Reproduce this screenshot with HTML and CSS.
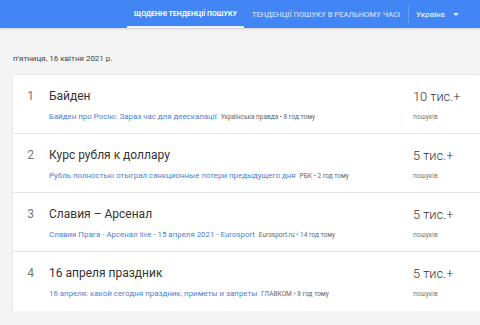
FILE: index.html
```html
<!DOCTYPE html>
<html lang="uk">
<head>
  <meta charset="UTF-8">
  <title>Тенденції пошуку</title>
  <link rel="stylesheet" href="styles.css">
</head>
<body>
  <div class="topbar">
    <div class="tabs">
      <div class="tab active">ЩОДЕННІ ТЕНДЕНЦІЇ ПОШУКУ</div>
      <div class="tab">ТЕНДЕНЦІЇ ПОШУКУ В РЕАЛЬНОМУ ЧАСІ</div>
    </div>
    <div class="geo">Україна <span class="caret"></span></div>
  </div>

  <div class="content">
    <div class="date">п'ятниця, 16 квітня 2021 р.</div>

    <div class="list">
      <div class="row">
        <div class="idx">1</div>
        <div class="main">
          <div class="title">Байден</div>
          <div class="sub"><a>Байден про Росію: Зараз час для деескалації</a> <span class="src">Українська правда • 8 год тому</span></div>
        </div>
        <div class="count">
          <div class="num">10 тис.+</div>
          <div class="lbl">пошуків</div>
        </div>
      </div>
      <div class="row">
        <div class="idx">2</div>
        <div class="main">
          <div class="title">Курс рубля к доллару</div>
          <div class="sub"><a>Рубль полностью отыграл санкционные потери предыдущего дня</a> <span class="src">РБК • 2 год тому</span></div>
        </div>
        <div class="count">
          <div class="num">5 тис.+</div>
          <div class="lbl">пошуків</div>
        </div>
      </div>
      <div class="row">
        <div class="idx">3</div>
        <div class="main">
          <div class="title">Славия – Арсенал</div>
          <div class="sub"><a>Славия Прага - Арсенал live - 15 апреля 2021 - Eurosport</a> <span class="src">Eurosport.ru • 14 год тому</span></div>
        </div>
        <div class="count">
          <div class="num">5 тис.+</div>
          <div class="lbl">пошуків</div>
        </div>
      </div>
      <div class="row">
        <div class="idx">4</div>
        <div class="main">
          <div class="title">16 апреля праздник</div>
          <div class="sub"><a>16 апреля: какой сегодня праздник, приметы и запреты</a> <span class="src">ГЛАВКОМ • 8 год тому</span></div>
        </div>
        <div class="count">
          <div class="num">5 тис.+</div>
          <div class="lbl">пошуків</div>
        </div>
      </div>
    </div>
  </div>
</body>
</html>
```

FILE: styles.css
```css
body { margin: 0; font-family: Roboto, Arial, sans-serif; background: #f4f4f4; color: #333; }

.topbar {
  height: 28px;
  background: #4285f4;
  display: flex;
  align-items: center;
  padding-left: 127px;
  box-shadow: 0 1px 2px rgba(0,0,0,0.15);
}
.tabs { display: flex; height: 28px; }
.tab {
  color: rgba(255,255,255,0.7);
  font-size: 7.6px;
  font-weight: 500;
  padding: 0 8px;
  display: flex;
  align-items: center;
  box-sizing: border-box;
  height: 28px;
  white-space: nowrap;
}
.tab.active {
  color: #fff;
  font-weight: 700;
  border-bottom: 2px solid #e8f0fe;
  padding: 2px 7px 0;
  font-size: 7px;
}
.geo {
  margin-left: 0;
  border-left: 1px solid rgba(255,255,255,0.2);
  height: 18px;
  padding-left: 7px;
  display: flex;
  align-items: center;
  color: rgba(255,255,255,0.85);
  font-size: 8px;
  font-weight: 500;
}
.caret {
  margin-left: 8px;
  border-left: 3px solid transparent;
  border-right: 3px solid transparent;
  border-top: 3px solid rgba(255,255,255,0.85);
}

.content { padding: 26px 0 0 13px; }
.date { font-size: 8px; color: #444; margin-bottom: 12px; }

.list {
  background: #fff;
  box-shadow: 0 0 2px rgba(0,0,0,0.12);
}
.row {
  display: flex;
  height: 59px;
  border-bottom: 1px solid #e4e4e4;
  box-sizing: border-box;
}
.row:last-child { border-bottom: none; }
.idx { width: 36px; text-align: right; padding-right: 15px; box-sizing: border-box; padding-top: 14px; font-size: 12px; color: #777; }
.main { flex: 1; padding-top: 14px; }
.title { font-size: 12px; color: #333; }
.sub { margin-top: 9px; font-size: 7.9px; white-space: nowrap; }
.sub a { color: #4a7fd4; }
.src { color: #666; font-size: 6.5px; margin-left: 2px; }
.count { width: 67px; padding-top: 14px; }
.num { font-size: 12.8px; font-weight: 300; color: #333; }
.lbl { font-size: 6.5px; color: #777; margin-top: 9px; }
```
